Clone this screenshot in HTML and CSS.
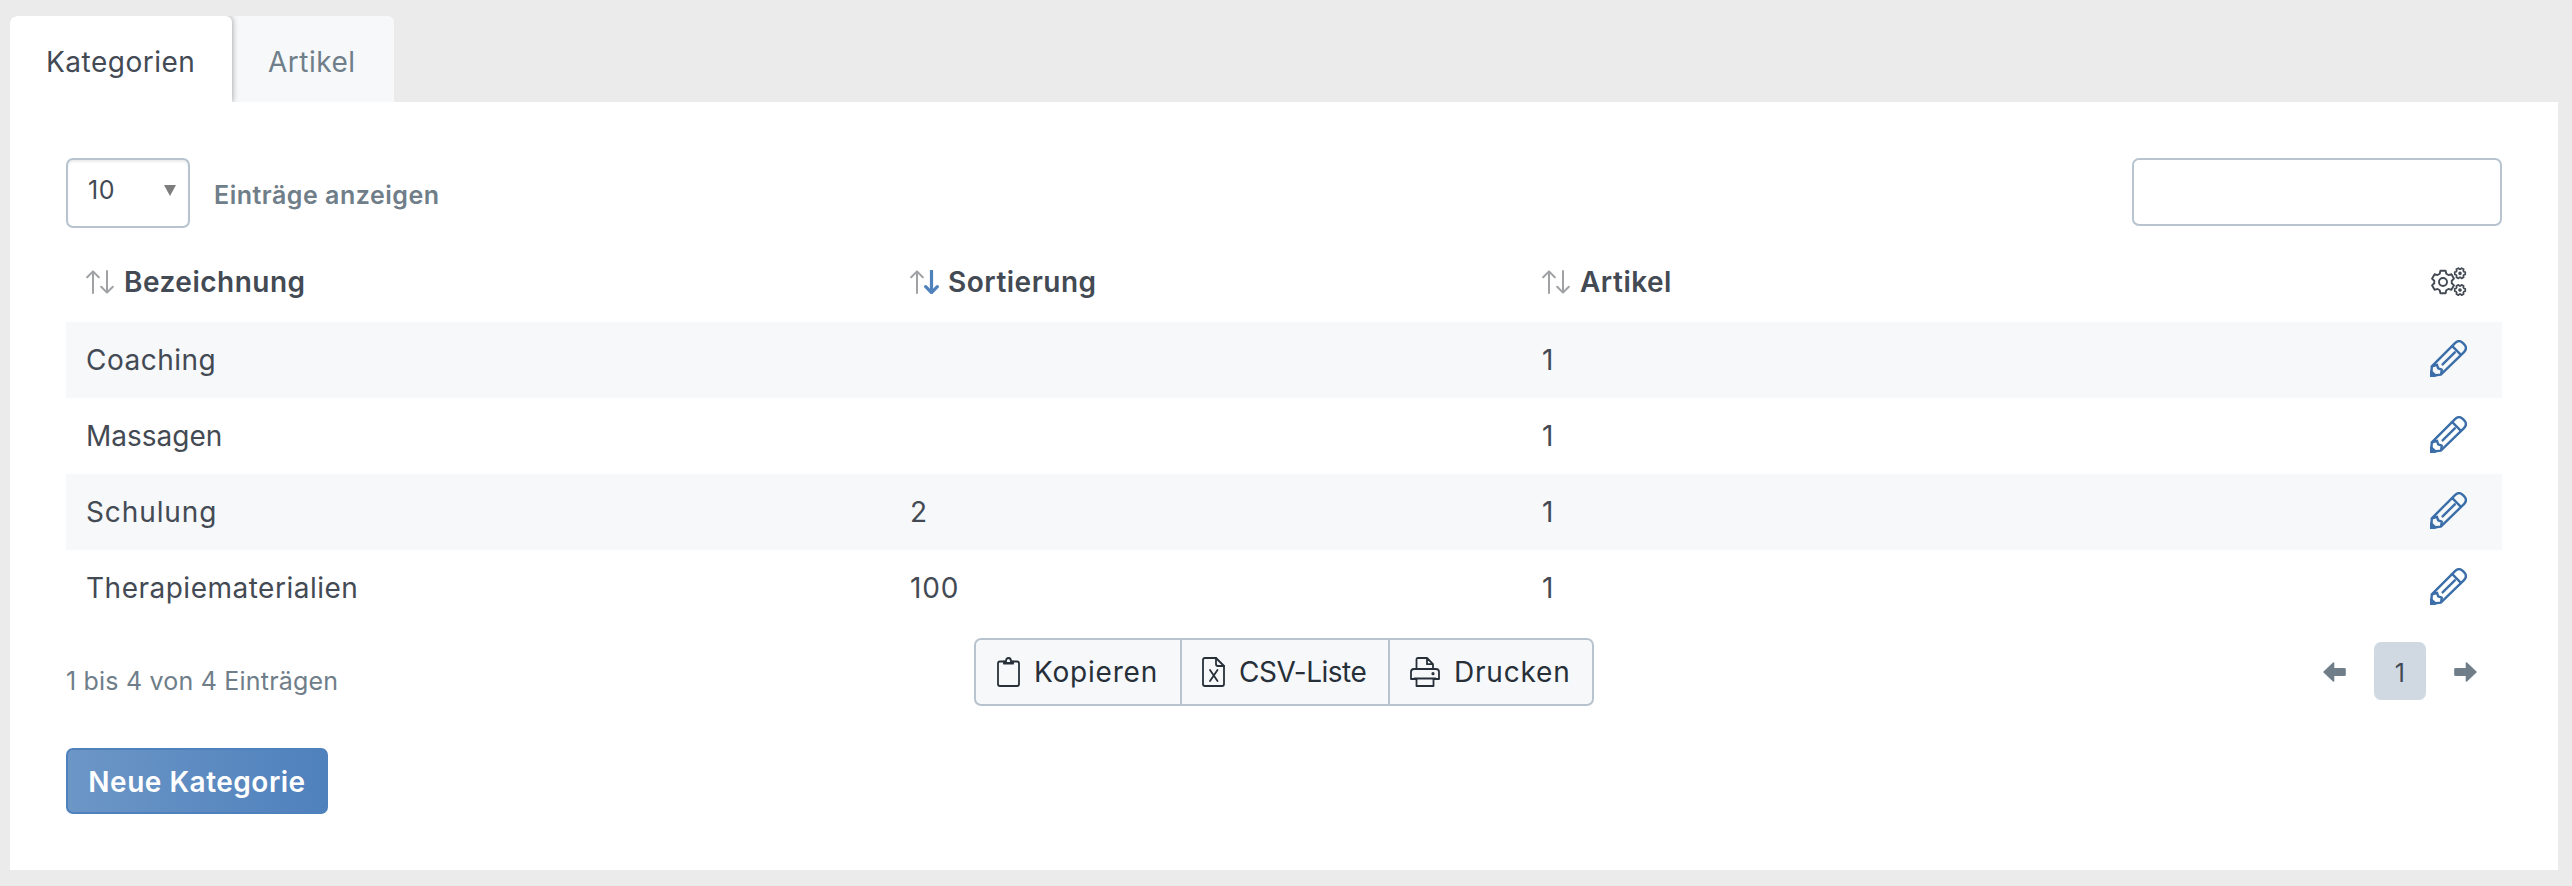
FILE: index.html
```html
<!DOCTYPE html>
<html lang="de">
<head>
    <meta charset="UTF-8">
    <meta name="viewport" content="width=device-width, initial-scale=1.0">
    <title>Kategorien</title>
    <link rel="stylesheet" href="styles.css">
</head>
<body>
    <svg class="sprite">
        <defs>
            <symbol id="arrow-up" viewBox="0 0 14 24">
                <path d="M7 23V2M1.2 7.3L7 1.4l5.8 5.9" />
            </symbol>
            <symbol id="arrow-down" viewBox="0 0 14 24">
                <path d="M7 1v21M1.2 16.7L7 22.6l5.8-5.9" />
            </symbol>
            <symbol id="pencil" viewBox="0 0 37 37">
                <path d="M1.8 26.3L25 3.1q4-4 8 0l1 1q4 4 0 8L10.800 34.600L1.200 35.800Z" />
                <path d="M22.300 6.200l8.600 8.600M12.600 24.400L24.800 12.300M3 26l4-1.200 1.200 3.600 3.600 1.200-.6 4" />
                <path class="solid" d="M1 31.500L5.500 35.500L1 36Z" />
            </symbol>
            <path id="gear" d="M-3.3-8.2L-2.6-11.2H2.6L3.3-8.2L5.45-6.96L8.4-7.85L11-3.35L8.75-1.24V1.24L11 3.35L8.4 7.85L5.45 6.96L3.3 8.2L2.6 11.2H-2.6L-3.3 8.2L-5.45 6.96L-8.4 7.85L-11 3.35L-8.75 1.24V-1.24L-11-3.35L-8.4-7.85L-5.45-6.96Z" />
        </defs>
    </svg>

    <ul class="tabs">
        <li class="tab active">Kategorien</li>
        <li class="tab">Artikel</li>
    </ul>

    <div class="panel">
        <div class="toolbar">
            <label class="length">
                <span class="select-wrap">
                    <select>
                        <option>10</option>
                        <option>25</option>
                        <option>50</option>
                    </select>
                </span>
                <span class="length-text">Einträge anzeigen</span>
            </label>
            <input class="search" type="text">
        </div>

        <table>
            <colgroup>
                <col class="col-name">
                <col class="col-sort">
                <col>
                <col class="col-action">
            </colgroup>
            <thead>
                <tr>
                    <th><div class="head"><svg class="arrow"><use href="#arrow-up" /></svg><svg class="arrow"><use href="#arrow-down" /></svg><span>Bezeichnung</span></div></th>
                    <th><div class="head sorted"><svg class="arrow"><use href="#arrow-up" /></svg><svg class="arrow on"><use href="#arrow-down" /></svg><span>Sortierung</span></div></th>
                    <th><div class="head"><svg class="arrow"><use href="#arrow-up" /></svg><svg class="arrow"><use href="#arrow-down" /></svg><span>Artikel</span></div></th>
                    <th>
                        <svg class="gears" viewBox="0 0 37 30">
                            <use href="#gear" transform="translate(13 15)" />
                            <circle cx="13" cy="15" r="4" />
                            <g class="small" transform="translate(30 6.300) rotate(30) scale(.47)">
                                <use href="#gear" />
                                <circle cx="0" cy="0" r="2" />
                            </g>
                            <g class="small" transform="translate(30 23) rotate(30) scale(.47)">
                                <use href="#gear" />
                                <circle cx="0" cy="0" r="2" />
                            </g>
                        </svg>
                    </th>
                </tr>
            </thead>
            <tbody>
                <tr>
                    <td>Coaching</td>
                    <td></td>
                    <td>1</td>
                    <td><svg class="pencil"><use href="#pencil" /></svg></td>
                </tr>
                <tr>
                    <td class="tight">Massagen</td>
                    <td></td>
                    <td>1</td>
                    <td><svg class="pencil"><use href="#pencil" /></svg></td>
                </tr>
                <tr>
                    <td class="wide">Schulung</td>
                    <td>2</td>
                    <td>1</td>
                    <td><svg class="pencil"><use href="#pencil" /></svg></td>
                </tr>
                <tr>
                    <td>Therapiematerialien</td>
                    <td class="wide">100</td>
                    <td>1</td>
                    <td><svg class="pencil"><use href="#pencil" /></svg></td>
                </tr>
            </tbody>
        </table>

        <div class="footer">
            <div class="info">1 bis 4 von 4 Einträgen</div>
            <div class="export">
                <button class="export-btn copy">
                    <svg viewBox="0 0 24 30">
                        <path d="M7 4.500H3q-2 0-2 2V27q0 2 2 2h17q2 0 2-2V6.500q0-2-2-2H16" />
                        <path d="M7 6.700V4.500h2q0-3.500 2.500-3.500T14 4.500h2v2.200Z" />
                        <path d="M7.500 6h8" />
                    </svg>
                    <span>Kopieren</span>
                </button>
                <button class="export-btn csv">
                    <svg viewBox="0 0 24 30">
                        <path d="M14 1H3Q1 1 1 3v24q0 2 2 2h17q2 0 2-2V9Z" />
                        <path d="M14 1v6q0 2 2 2h6M8 13l7.500 11M15.500 13L8 24" />
                    </svg>
                    <span>CSV-Liste</span>
                </button>
                <button class="export-btn print">
                    <svg viewBox="0 0 30 30">
                        <path d="M6.500 12V2.500Q6.500 1 8 1h9l6 6.200V12M17 1v6.200h6" />
                        <path d="M6.500 22H1v-7q0-3 3-3h22q3 0 3 3v7h-5.500" />
                        <path d="M4.500 21.500h21M6.500 21.500V29h17v-7.500" />
                        <circle cx="23" cy="16.700" r=".7" />
                    </svg>
                    <span>Drucken</span>
                </button>
            </div>
            <div class="pagination">
                <svg class="page-arrow" viewBox="0 0 23 20"><path d="M0 10L10 .5q1.300-.8 1.300.8V6H21.500q1.300 0 1.300 1.300v5.400q0 1.300-1.300 1.300H11.300v4.700q0 1.600-1.300.8Z" /></svg>
                <span class="page">1</span>
                <svg class="page-arrow" viewBox="0 0 23 20"><path d="M23 10L13 .5q-1.300-.8-1.300.8V6H1.500Q.2 6 .2 7.300v5.400Q.2 14 1.500 14h10.200v4.700q0 1.600 1.300.8Z" /></svg>
            </div>
        </div>

        <button class="btn-new">Neue Kategorie</button>
    </div>
</body>
</html>
```
FILE: styles.css
```css
* {
    box-sizing: border-box;
}
body {
    margin: 0;
    padding: 16px 14px 16px 10px;
    height: 886px;
    background: #ebebeb;
    color: #434a54;
    font-family: Inter, "Liberation Sans", sans-serif;
    font-size: 28px;
    letter-spacing: 0.5px;
    overflow: hidden;
}
button, select, input {
    font-family: inherit;
    color: inherit;
    letter-spacing: inherit;
}
.sprite {
    position: absolute;
    width: 0;
    height: 0;
}
svg {
    fill: none;
    stroke: currentColor;
    stroke-linecap: round;
    stroke-linejoin: round;
}

/* Tabs */
.tabs {
    display: flex;
    margin: 0;
    padding: 0;
    height: 86px;
    width: 384px;
    list-style: none;
    overflow: hidden;
    border-radius: 6px 6px 0 0;
    background: #f6f8fa;
}
.tab {
    width: 162px;
    padding-left: 36px;
    line-height: 92px;
    color: #6f7e89;
}
.tab.active {
    width: 222px;
    background: #fff;
    color: #434a54;
    border-radius: 6px 6px 0 0;
    box-shadow: 0 0 6px rgba(0, 0, 0, 0.4);
}

.panel {
    height: 768px;
    padding: 56px;
    background: #fff;
}

/* Toolbar */
.toolbar {
    display: flex;
    justify-content: space-between;
    height: 84px;
}
.length {
    display: flex;
    align-items: flex-start;
}
.select-wrap {
    position: relative;
    width: 124px;
    height: 70px;
}
.select-wrap::after {
    content: "";
    position: absolute;
    top: 27px;
    right: 14px;
    border: 6.5px solid transparent;
    border-top: 11px solid #7d7d7d;
    border-bottom: 0;
}
select {
    appearance: none;
    width: 100%;
    height: 100%;
    padding: 0 0 7px 20px;
    border: 2px solid #b7c4cf;
    border-radius: 7px;
    background: #fff;
    box-shadow: inset 0 2px 2px rgba(0, 0, 0, 0.08);
    font-size: 25px;
}
.length-text {
    margin-left: 24px;
    line-height: 74px;
    font-size: 25px;
    font-weight: 600;
    color: #6f7e89;
}
.search {
    width: 370px;
    height: 68px;
    border: 2px solid #b7c4cf;
    border-radius: 7px;
    background: #fff;
}

/* Table */
table {
    width: 100%;
    table-layout: fixed;
    border-collapse: collapse;
}
.col-name { width: 824px; }
.col-sort { width: 632px; }
.col-action { width: 200px; }
th, td {
    padding: 0 20px;
    text-align: left;
}
th {
    height: 80px;
    font-weight: 600;
}
td {
    height: 76px;
}
.tight { letter-spacing: 0; }
.wide { letter-spacing: 0.9px; }
tbody tr:nth-child(odd) {
    background: #f6f8fa;
}
th:last-child, td:last-child {
    padding-right: 35px;
    text-align: right;
}
.head {
    display: flex;
    align-items: center;
}
.head span {
    margin-left: 10px;
}
.head.sorted span {
    margin-left: 9px;
}
.arrow {
    width: 14px;
    height: 24px;
    stroke-width: 2;
    color: #9fa1a4;
}
.arrow.on {
    width: 15px;
    stroke-width: 3.2;
    color: #4f81bd;
}
.gears, .pencil {
    display: inline-block;
    vertical-align: middle;
}
.gears {
    width: 37px;
    height: 30px;
    margin-top: -5px;
    stroke-width: 1.9;
}
.gears .small {
    stroke-width: 3.6;
}
.pencil {
    width: 37px;
    height: 37px;
    margin-top: -7px;
    stroke-width: 2.4;
    color: #3b6ea8;
}
.solid {
    fill: currentColor;
}

/* Footer */
.footer {
    display: grid;
    grid-template-columns: 1fr auto 1fr;
    align-items: center;
    height: 68px;
    margin-top: 12px;
}
.info {
    padding-top: 18px;
    font-size: 25px;
    letter-spacing: 0.2px;
    color: #6f7e89;
}
.export {
    display: flex;
    width: 620px;
    height: 68px;
    border: 2px solid #b7c4cf;
    border-radius: 7px;
    background: #f6f8fa;
    overflow: hidden;
}
.export-btn {
    display: flex;
    align-items: center;
    padding: 0 0 0 21px;
    border: 0;
    background: none;
    color: #272f38;
    font-size: 28px;
    letter-spacing: 0.8px;
}
.export-btn + .export-btn {
    padding-left: 20px;
    border-left: 2px solid #b7c4cf;
}
.export-btn svg {
    width: 24px;
    height: 30px;
    margin-right: 13px;
    stroke-width: 1.8;
}
.export-btn.copy { width: 204px; }
.export-btn.csv {
    width: 208px;
    letter-spacing: -0.5px;
}
.export-btn.print { flex: 1; }
.export-btn.print svg {
    width: 30px;
    margin-right: 14px;
}
.pagination {
    display: flex;
    justify-content: flex-end;
    align-items: center;
    gap: 28px;
    padding-right: 25px;
}
.page {
    width: 52px;
    height: 58px;
    margin-top: -2px;
    border-radius: 7px;
    background: #d0d9e2;
    font-size: 25px;
    line-height: 62px;
    text-align: center;
}
.page-arrow {
    width: 23px;
    height: 20px;
    fill: #6f7e89;
    stroke: none;
}

.btn-new {
    display: block;
    width: 262px;
    height: 66px;
    margin-top: 42px;
    padding: 2px 0 0;
    border: 2px solid #4f81bd;
    border-radius: 7px;
    background: linear-gradient(90deg, #6c96c6, #4f81bd);
    color: #fff;
    font-size: 28px;
    font-weight: 600;
}
```
